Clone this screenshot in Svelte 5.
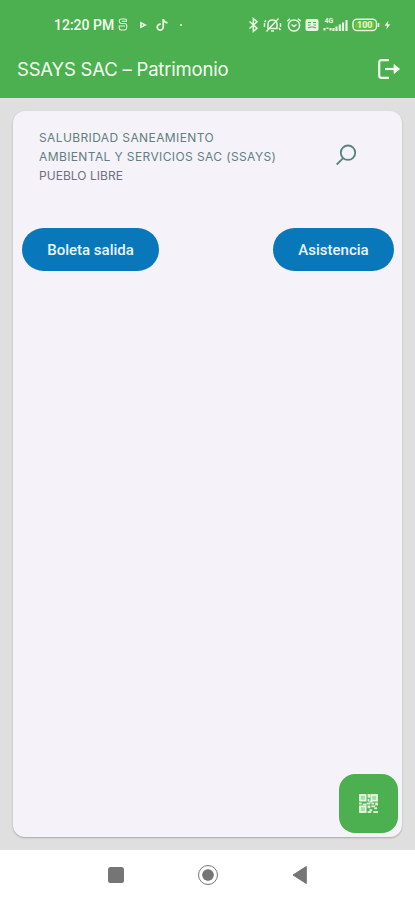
<script>
  const company = ['SALUBRIDAD SANEAMIENTO', 'AMBIENTAL Y SERVICIOS SAC (SSAYS)'];
  const branch = 'PUEBLO LIBRE';

  const actions = [
    { key: 'boleta', label: 'Boleta salida' },
    { key: 'asistencia', label: 'Asistencia' },
  ];

  // one entry per drawn square in the qr glyph: x, y, w, h
  const qrDots = [
    [9, 0, 3, 4], [9, 5, 2, 3], [11, 7, 3, 2], [8, 9, 4, 2],
    [0, 9, 3, 2], [4, 10, 4, 2], [13, 9, 3, 2], [17, 9, 3, 3],
    [9, 12, 3, 3], [13, 12, 4, 2], [16, 14, 3, 2], [11, 16, 3, 2],
    [9, 18, 4, 2], [15, 18, 5, 2],
  ];
</script>

<div class="screen">
  <header>
    <div class="status">
      <div class="status-left">
        <span class="time">12:20 PM</span>
        <svg class="s-logo" width="10" height="14" viewBox="0 0 10 14">
          <path d="M8.5 4V2.5Q8.5 1 7 1H3Q1.2 1 1.2 3T3 5.5H7Q8.8 5.5 8.8 8.5T7 12H3Q1.2 12 1.2 10V8H7M4 3.2H8.5" />
        </svg>
        <svg class="play" width="9" height="10" viewBox="0 0 9 10">
          <path d="M1 1.5 8 5 1 8.5Z" fill="#e6f7df" />
          <circle cx="3.3" cy="5" r="0.7" fill="#4caf50" />
        </svg>
        <svg class="note" width="13" height="14" viewBox="0 0 13 14">
          <path d="M7.2 1V9.3A3 3 0 1 1 4.8 6.2M7.2 1.2Q7.8 4.4 11.5 4.8" />
        </svg>
        <span class="dot"></span>
      </div>
      <div class="status-right">
        <svg width="11" height="16" viewBox="0 0 11 16">
          <path d="M1.5 4.5 9 11.2 5.3 14.5V1.5L9 4.8 1.5 11.5" />
        </svg>
        <svg width="19" height="16" viewBox="0 0 19 16">
          <path d="M5 11.5V7Q5.2 3 9.5 3T14 7V11.5ZM8 14H11M15.5 1.5 3.5 14.5M1.5 6V10M17.5 6V10M3 3.5 1.5 5M16 11 17.5 13" />
        </svg>
        <svg width="16" height="16" viewBox="0 0 16 16">
          <circle cx="8" cy="8.5" r="5.6" />
          <path d="M1.2 4.2 4 1.8M12 1.8 14.8 4.2M5.5 7.5 8 9.5 10.5 7.5" />
        </svg>
        <svg width="14" height="14" viewBox="0 0 14 14">
          <rect x="0.5" y="1" width="13" height="12" rx="2" fill="#e6f7df" stroke="none" />
          <path class="cutout" d="M3 4.5H6M8 4.5H11M3 7H5.5M8.5 7H11M3 10Q7 8 11 10" />
        </svg>
        <svg class="signal" width="26" height="16" viewBox="0 0 26 16">
          <text x="1.5" y="6">4G</text>
          <path d="M1.5 11V13.5M4.5 10.5V12M7.5 11V13.5M10.5 11V14M13.5 9.5V14M16.8 7.5V14M20 5.5V14M23.5 3V14" />
        </svg>
        <svg class="battery" width="28" height="14" viewBox="0 0 28 14">
          <rect x="1" y="1.2" width="23.5" height="11.4" rx="4" />
          <rect x="3" y="3.2" width="19.5" height="7.4" rx="2" fill="#70c431" stroke="none" />
          <path d="M26.5 5V9" />
          <text x="12.8" y="10.2" text-anchor="middle">100</text>
        </svg>
        <svg width="7" height="12" viewBox="0 0 7 12">
          <path d="M4.3 1.5.6 6.8H3L2.3 10.5 6.4 5.3H3.8Z" fill="#e6f7df" stroke="none" />
        </svg>
      </div>
    </div>
    <div class="toolbar">
      <h1>SSAYS SAC – Patrimonio</h1>
      <button class="icon-btn" aria-label="Salir">
        <svg width="24" height="24" viewBox="0 0 24 24">
          <path d="M12 3.2H4.5Q2.2 3.2 2.2 5.5V18.5Q2.2 20.8 4.5 20.8H12" />
          <path d="M8 12H20.5" />
          <path d="M17 7.5 22.6 12 17 16.5Z" fill="#f4fff0" stroke-width="0.8" />
        </svg>
      </button>
    </div>
  </header>

  <main>
    <section class="card">
      <div class="company">
        <p>
          {#each company as line}
            <span>{line}</span>
          {/each}
          <span class="branch">{branch}</span>
        </p>
        <button class="icon-btn search" aria-label="Buscar">
          <svg width="22" height="22" viewBox="0 0 22 22">
            <circle cx="13" cy="8.7" r="7.2" />
            <path d="M8.2 14.1 1.7 20.5" />
          </svg>
        </button>
      </div>
      <div class="actions">
        {#each actions as action}
          <button class="pill {action.key}">{action.label}</button>
        {/each}
      </div>
      <button class="fab" aria-label="Escanear QR">
        <svg width="19" height="19" viewBox="0 0 20 20">
          <g fill="#a9dca6" stroke="#e9f9e5" stroke-width="1.8">
            <rect x="1" y="1" width="6" height="6" />
            <rect x="13" y="1" width="6" height="6" />
            <rect x="1" y="13" width="6" height="6" />
          </g>
          {#each qrDots as [x, y, w, h]}
            <rect {x} {y} width={w} height={h} fill="#d9f2d5" />
          {/each}
        </svg>
      </button>
    </section>
  </main>

  <nav>
    <span class="recent"></span>
    <span class="home"></span>
    <svg width="16" height="20" viewBox="0 0 16 20">
      <path d="M14.3 1.5V18.5L1 10Z" fill="#757575" stroke="#757575" stroke-linejoin="round" />
    </svg>
  </nav>
</div>

<style>
  :global(body) {
    margin: 0;
    background: #fff;
  }
  .screen {
    display: flex;
    flex-direction: column;
    width: 415px;
    height: 900px;
    overflow: hidden;
    font-family: Inter, "Liberation Sans", sans-serif;
  }
  button {
    border: none;
    padding: 0;
    cursor: pointer;
  }
  svg {
    display: block;
    flex: none;
  }
  header {
    height: 98px;
    flex: none;
    background: #4caf50;
    color: #f4fff0;
  }
  .status {
    display: flex;
    justify-content: space-between;
    align-items: center;
    height: 40px;
    padding: 9px 24px 0 54px;
    box-sizing: border-box;
  }
  .status-left,
  .status-right {
    display: flex;
    align-items: center;
  }
  .status svg {
    fill: none;
    stroke: #e6f7df;
    stroke-width: 1.5;
  }
  .status .s-logo {
    margin-left: 4px;
    stroke-width: 1.1;
  }
  .status .play {
    margin-left: 11px;
    stroke: none;
  }
  .status .note {
    margin-left: 8px;
    stroke-width: 1.8;
  }
  .dot {
    width: 2px;
    height: 2px;
    margin-left: 11px;
    border-radius: 50%;
    background: #e6f7df;
  }
  .status-right {
    gap: 3.6px;
  }
  .status .cutout {
    stroke: #4caf50;
    stroke-width: 1.2;
  }
  .status .signal {
    stroke-width: 2.2;
  }
  .status text {
    font-family: Roboto, sans-serif;
    font-weight: 700;
    fill: #e6f7df;
    stroke: none;
  }
  .signal text {
    font-size: 7px;
  }
  .battery text {
    font-size: 9px;
  }
  .time {
    font: 500 14px Roboto, sans-serif;
    white-space: nowrap;
  }
  .toolbar {
    display: flex;
    justify-content: space-between;
    align-items: center;
    height: 58px;
    padding: 0 14px 0 17px;
  }
  h1 {
    margin: 0;
    font-size: 18.5px;
    font-weight: 400;
    letter-spacing: -0.2px;
    white-space: nowrap;
  }
  .icon-btn {
    background: none;
  }
  .toolbar .icon-btn svg {
    fill: none;
    stroke: #f4fff0;
    stroke-width: 2.2;
  }
  main {
    flex: 1;
    display: flex;
    padding: 13px;
    background: #dfdfdf;
  }
  .card {
    position: relative;
    flex: 1;
    border-radius: 12px;
    background: #f6f2fa;
    box-shadow: 0 1px 2px rgba(0, 0, 0, 0.25);
  }
  .company {
    display: flex;
    justify-content: space-between;
    align-items: flex-start;
    height: 117px;
    padding: 17px 45px 0 26px;
    box-sizing: border-box;
  }
  .company p {
    margin: 0;
    font-size: 12px;
    line-height: 19px;
    letter-spacing: 0.39px;
    color: #5f7f80;
  }
  .company span {
    display: block;
    white-space: nowrap;
  }
  .company .branch {
    letter-spacing: 0.05px;
    color: #6d7080;
  }
  .search {
    margin-top: 16px;
  }
  .search svg {
    fill: none;
    stroke: #54837d;
    stroke-width: 1.8;
  }
  .actions {
    display: flex;
    justify-content: space-between;
    padding: 0 8px 0 9px;
  }
  .pill {
    height: 43px;
    border-radius: 22px;
    background: #0878bb;
    color: #e9f6ff;
    font: 500 15px Roboto, sans-serif;
    white-space: nowrap;
  }
  .boleta {
    width: 137px;
  }
  .asistencia {
    width: 121px;
  }
  .fab {
    position: absolute;
    right: 4px;
    bottom: 4px;
    display: flex;
    justify-content: center;
    align-items: center;
    width: 59px;
    height: 59px;
    border-radius: 16px;
    background: #4caf50;
  }
  nav {
    display: flex;
    align-items: center;
    height: 50px;
    flex: none;
    padding-left: 108px;
    background: #fff;
  }
  .recent {
    width: 16px;
    height: 16px;
    border-radius: 2.5px;
    background: #757575;
  }
  .home {
    width: 12px;
    height: 12px;
    margin: 0 75px 0 74.5px;
    border: 3px solid #fff;
    border-radius: 50%;
    outline: 1.5px solid #757575;
    background: #757575;
    background-clip: padding-box;
  }
</style>
